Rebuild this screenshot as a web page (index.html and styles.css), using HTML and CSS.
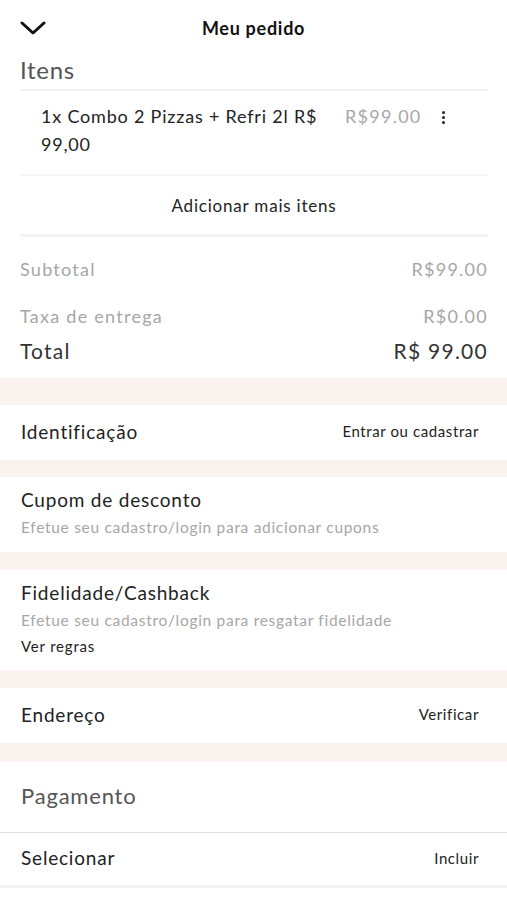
FILE: index.html
```html
<!DOCTYPE html>
<html lang="pt-BR">
<head>
<meta charset="utf-8">
<title>Meu pedido</title>
<link rel="stylesheet" href="styles.css">
</head>
<body>
<div class="page">
  <header class="topbar">
    <svg class="back" width="26" height="14" viewBox="0 0 26 14"><path d="M2 2 L13 12 L24 2" fill="none" stroke="#111" stroke-width="3" stroke-linecap="round" stroke-linejoin="round"/></svg>
    <h1 class="title">Meu pedido</h1>
  </header>

  <section class="items">
    <h2 class="items-title">Itens</h2>
    <div class="item">
      <div class="item-name">1x Combo 2 Pizzas + Refri 2l R$ 99,00</div>
      <div class="item-price">R$99.00</div>
      <div class="kebab"><span></span><span></span><span></span></div>
    </div>
    <div class="add-more">Adicionar mais itens</div>
    <div class="summary">
      <div class="sum-row sub"><span>Subtotal</span><span>R$99.00</span></div>
      <div class="sum-row fee"><span>Taxa de entrega</span><span>R$0.00</span></div>
      <div class="sum-row total"><span>Total</span><span>R$ 99.00</span></div>
    </div>
  </section>

  <div class="band band-first"></div>
  <div class="row simple">
    <span class="row-title">Identificação</span>
    <span class="row-action">Entrar ou cadastrar</span>
  </div>
  <div class="band band-thin"></div>
  <div class="row block coupon">
    <span class="row-title">Cupom de desconto</span>
    <span class="row-sub">Efetue seu cadastro/login para adicionar cupons</span>
  </div>
  <div class="band"></div>
  <div class="row block loyalty">
    <span class="row-title">Fidelidade/Cashback</span>
    <span class="row-sub">Efetue seu cadastro/login para resgatar fidelidade</span>
    <span class="row-link">Ver regras</span>
  </div>
  <div class="band"></div>
  <div class="row simple">
    <span class="row-title">Endereço</span>
    <span class="row-action">Verificar</span>
  </div>
  <div class="band band-last"></div>
  <div class="pay-head">Pagamento</div>
  <div class="row simple pay-row">
    <span class="row-title">Selecionar</span>
    <span class="row-action">Incluir</span>
  </div>
</div>
</body>
</html>
```

FILE: styles.css
```css
* { box-sizing: border-box; }
html, body { margin: 0; padding: 0; background: #fff; }
body {
  font-family: Lato, "Noto Sans", "Liberation Sans", sans-serif;
  color: #222;
  letter-spacing: 0.05em;
}
.page { width: 507px; }

.topbar {
  height: 56px;
  display: flex;
  align-items: center;
  justify-content: center;
  position: relative;
}
.back { position: absolute; left: 20px; top: 21px; }
.title {
  margin: 0;
  font-size: 18px;
  font-weight: 700;
  color: #111;
  letter-spacing: 0.04em;
}

.items { padding: 0 19px 0 20px; }
.items-title {
  margin: 0;
  height: 35px;
  line-height: 28px;
  font-size: 24px;
  font-weight: 400;
  color: #555;
  letter-spacing: 0.03em;
  border-bottom: 2px solid #f3f3f3;
}
.item {
  display: flex;
  align-items: flex-start;
  padding: 11px 0 16px 21px;
  border-bottom: 2px solid #f5f5f5;
}
.item-name {
  width: 300px;
  font-size: 18px;
  line-height: 28px;
  color: #222;
}
.item-price {
  margin-left: 4px;
  font-size: 18px;
  line-height: 28px;
  color: #a8a8a8;
  letter-spacing: 0.07em;
}
.kebab {
  margin-left: 20px;
  margin-top: 9px;
  display: flex;
  flex-direction: column;
  gap: 2px;
}
.kebab span { width: 3px; height: 3px; border-radius: 50%; background: #222; }

.add-more {
  height: 61px;
  display: flex;
  align-items: center;
  justify-content: center;
  font-size: 17px;
  color: #222;
  border-bottom: 3px solid #f3f3f3;
}
.summary { padding: 8px 0 13px; }
.sum-row {
  display: flex;
  justify-content: space-between;
  align-items: center;
}
.sub { height: 48px; font-size: 18px; color: #a6a6a6; letter-spacing: 0.07em; }
.fee { height: 46px; font-size: 18px; color: #a6a6a6; letter-spacing: 0.07em; }
.total { height: 26px; font-size: 21px; color: #333; letter-spacing: 0.06em; padding-bottom: 3px; }

.band { height: 18px; background: #f9f2ee; }
.band-first { height: 27px; }
.band-thin { height: 17px; }
.band-last { height: 19px; }

.row { padding: 0 28px 0 21px; }
.simple {
  height: 55px;
  display: flex;
  justify-content: space-between;
  align-items: center;
  padding-bottom: 3px;
}
.row-title { font-size: 19px; color: #222; }
.row-action { font-size: 15px; color: #222; letter-spacing: 0.04em; }
.block { display: flex; flex-direction: column; }
.coupon { height: 75px; padding-top: 10px; }
.loyalty { height: 100px; padding-top: 10px; }
.block .row-title { line-height: 26px; }
.row-sub { font-size: 15.5px; line-height: 29px; color: #a6a6a6; letter-spacing: 0.045em; }
.row-link { font-size: 15px; line-height: 22px; color: #222; }

.pay-head {
  height: 71px;
  display: flex;
  align-items: center;
  padding-left: 21px;
  padding-bottom: 3px;
  font-size: 22px;
  color: #555;
  border-bottom: 1.5px solid #dcdcdc;
}
.pay-row {
  height: 55px;
  border-bottom: 3px solid #f3f3f3;
}
```
